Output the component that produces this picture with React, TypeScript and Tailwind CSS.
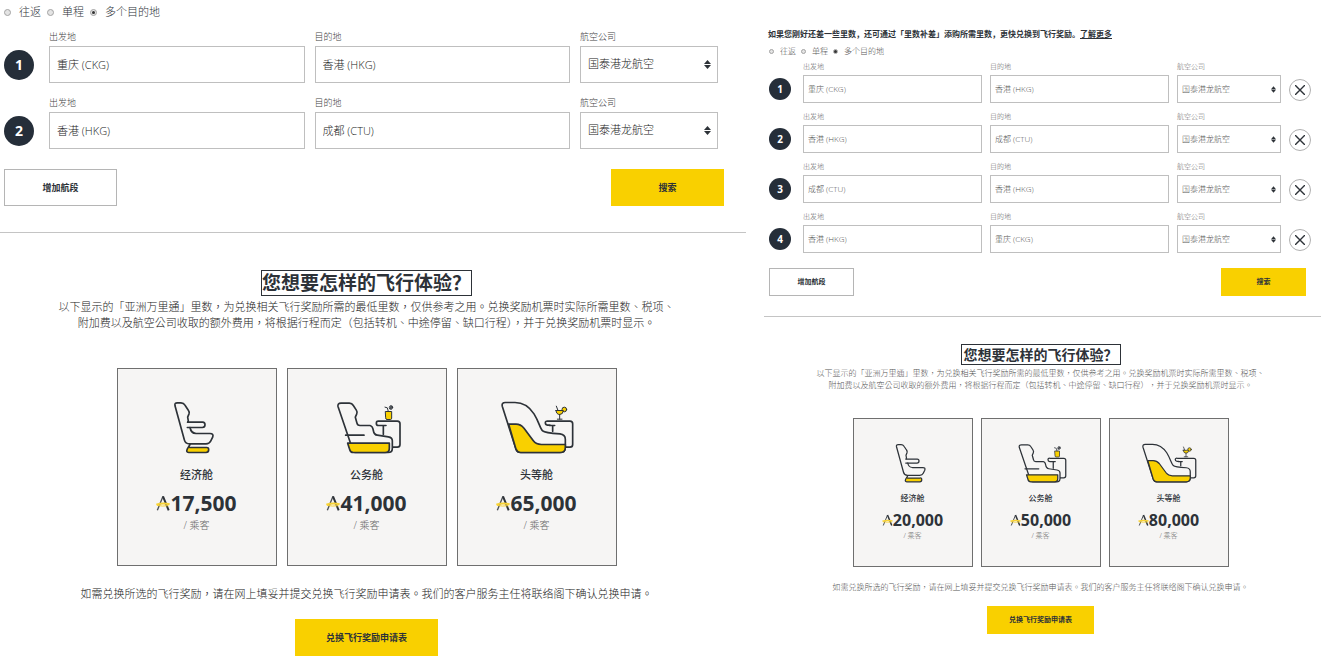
import clsx from 'clsx';
import { useId } from 'react';

type Size = 'lg' | 'sm';
type Cabin = 'economy' | 'business' | 'first';

type Segment = { from: string; to: string };
type Award = { cabin: Cabin; name: string; miles: string };

const styles = {
  lg: {
    radios: 'gap-[6px] pl-1 text-[11px] leading-4',
    radioLabel: 'gap-2',
    radio: 'size-[7px] after:size-[3px]',
    rows: 'gap-[15px] pl-1 pr-7 pt-3',
    row: 'grid-cols-[35px_1fr_1fr_138px] gap-[10px]',
    label: 'text-[9px] leading-[10px] pb-1 text-[#444]',
    control: 'h-[37px] px-[7px] text-[11px] text-[#222]',
    arrows: 'right-[7px] h-[9px] w-[7px]',
    number: 'size-[30px] text-sm mb-[3px]',
    actions: 'pl-1 pr-[22px] pt-5 pb-[26px]',
    button: 'h-[37px] w-[113px] text-[9px]',
    intro: 'pr-[13px] pt-[37px]',
    heading: 'h-[26px] text-[19px]',
    text: 'text-[11px] leading-4 text-[#222]',
    introText: 'pt-[3px]',
    cards: 'gap-[10px] pt-[37px]',
    card: 'w-40 pt-8 pb-8',
    seat: 'h-[53px] w-20',
    cabin: 'mt-[13px] text-[11px] leading-4',
    price: 'mt-2 text-[21px] leading-6',
    asia: 'h-4 w-[14px]',
    per: 'mt-[2px] text-[10px] leading-4',
    outro: 'pt-5 pb-[17px]',
    apply: 'h-[37px] w-[143px] text-[9px]',
  },
  sm: {
    radios: 'gap-[5px] pl-[5px] pt-1 text-[8px] leading-3 text-[#555]',
    radioLabel: 'gap-[6px]',
    radio: 'size-[5px] after:size-[3px]',
    rows: 'gap-2 pl-[5px] pr-[10px] pt-1',
    row: 'grid-cols-[26px_1fr_1fr_104px_22px] gap-2',
    label: 'text-[7px] leading-3 pb-[2px] text-[#666]',
    control: 'h-7 px-1 text-[8px] text-[#555]',
    arrows: 'right-[5px] h-[7px] w-[5px]',
    number: 'size-[22px] text-[10px] mb-[3px]',
    actions: 'pl-[5px] pr-[15px] pt-[15px] pb-5',
    button: 'h-7 w-[85px] text-[7px]',
    intro: 'pr-1 pt-[27px]',
    heading: 'h-[21px] px-[2px] text-sm',
    text: 'text-[8px] leading-3 text-[#555]',
    introText: 'pt-[2px]',
    cards: 'gap-2 pt-[27px]',
    card: 'w-[120px] pt-6 pb-6',
    seat: 'h-10 w-[60px]',
    cabin: 'mt-[9px] text-[8px] leading-3',
    price: 'mt-[7px] text-base leading-[18px]',
    asia: 'h-3 w-[11px]',
    per: 'mt-px text-[7px] leading-3',
    outro: 'pt-[14px] pb-[13px]',
    apply: 'h-7 w-[107px] text-[7px]',
  },
};

const Table = ({ d }: { d: string }) => <path d={d} fill="none" />;

const SeatIcon = ({ cabin, className }: { cabin: Cabin; className: string }) => {
  const common = {
    className,
    fill: '#f6f5f4',
    stroke: '#2d3238',
    strokeWidth: 5,
    strokeLinecap: 'round' as const,
    strokeLinejoin: 'round' as const,
    'aria-hidden': true,
  };

  if (cabin === 'economy') {
    return (
      <svg viewBox="141 124 240 158" {...common}>
        <path d="M240 254l-8 13q-5 11 4 11h52q8 0 8-8t-7-7h-50" fill="#f9d000" />
        <path
          d="M233 187l2-3-2-12 4-10q2-6-2-11l-10-15q-4-7-12-7h-11q-9 0-7 9l28 102q3 12 16 12h49q10 0 14-8l6-12q4-11-8-11h-42q-15-1-18-18"
          fill="none"
        />
        <path d="M233 187h45q7 0 7 8t-8 8h-45" fill="none" />
      </svg>
    );
  }

  if (cabin === 'business') {
    return (
      <svg viewBox="-99 124 240 158" {...common}>
        <Table d="M62 197h-6q-7 0-7-7t7-6h56q8 0 8 8v62q0 8-8 8H90M62 197h16M70 197v27" />
        <path d="M-66 140q-2-10 9-10h25q8 0 12 7l9 14q4 6 1 12l-4 9 5 18q1 7 9 7h30q8 2 10 15 2 13 12 14l33 5q12 2 12 12v22q0 13-13 13h-95q-9 0-11-9Z" />
        <path d="M-37 250H88v15q0 13-13 13h-95q-9 0-11-9Z" fill="#f9d000" />
        <path d="M-43 226h55" />
        <g strokeWidth="3">
          <path d="M77 155h18v20q0 4-4 4H81q-4 0-4-4Z" fill="#f9d000" />
          <path d="M85 155l-3-11-7-2" fill="none" />
          <circle cx="93" cy="143" r="5" />
          <path d="M89 146l8-6M93 138v10" />
        </g>
      </svg>
    );
  }

  return (
    <svg viewBox="411 124 240 158" {...common}>
      <Table d="M570 196h-8q-6-1-6-7t8-5h66q8 0 8 8v62q0 8-8 8h-12M568 197h16M578 197v17" />
      <path d="M427 140q-3-12 9-12h29c28 0 44 14 57 34 16 26 18 44 26 51q6 6 52 9 16 2 16 16v24q0 16-16 16H482q-10 0-14-10Z" />
      <path d="M446 193h22q14 0 24 12l28 38q8 11 24 11h72v8q0 16-16 16H482q-10 0-14-10Z" fill="#f9d000" />
      <g strokeWidth="3">
        <circle cx="613" cy="149" r="7" fill="#f9d000" />
        <path d="M588 152h22q-1 12-11 12t-11-12Z" fill="#f9d000" />
        <path d="M599 164v14M592 178h14M594 152l-5-13" fill="none" />
      </g>
    </svg>
  );
};

const AsiaMilesMark = ({ className }: { className: string }) => (
  <svg viewBox="0 0 42 48" className={className} fill="none" aria-hidden>
    <path d="M4 46 21 4" stroke="#4c5055" strokeWidth="4" />
    <path d="M21 4 38 46" stroke="#2d3238" strokeWidth="6" />
    <path d="M1 29q18-6 40-1" stroke="#f9d335" strokeWidth="6" />
    <path d="M3 31q16 4 34 1" stroke="#f9d335" strokeWidth="3" />
  </svg>
);

const TripType = ({ size }: { size: Size }) => {
  const s = styles[size];
  const name = useId();

  return (
    <div className={clsx('flex items-center font-light', s.radios)}>
      {['往返', '单程', '多个目的地'].map((type) => (
        <label key={type} className={clsx('flex items-center', s.radioLabel)}>
          <input
            type="radio"
            name={name}
            defaultChecked={type === '多个目的地'}
            className={clsx(
              'flex appearance-none items-center justify-center rounded-full border border-[#a3a3a3] bg-[#e4e4e4] after:rounded-full checked:after:bg-[#333]',
              s.radio,
            )}
          />
          {type}
        </label>
      ))}
    </div>
  );
};

const TextField = ({ size, label, value }: { size: Size; label: string; value: string }) => (
  <label className="flex min-w-0 flex-col font-light">
    <span className={styles[size].label}>{label}</span>
    <input
      type="text"
      defaultValue={value}
      className={clsx('w-full border border-[#bfbfbf] bg-white pb-[2px]', styles[size].control)}
    />
  </label>
);

const AirlineField = ({ size }: { size: Size }) => (
  <label className="flex min-w-0 flex-col font-light">
    <span className={styles[size].label}>航空公司</span>
    <span className="relative flex items-center">
      <select
        className={clsx('w-full appearance-none border border-[#bfbfbf] bg-white', styles[size].control)}
      >
        <option>国泰港龙航空</option>
      </select>
      <svg
        viewBox="0 0 7 9"
        className={clsx('pointer-events-none absolute', styles[size].arrows)}
        fill="#2d3238"
        aria-hidden
      >
        <path d="M0 4 3.5 0 7 4ZM0 5h7L3.5 9Z" />
      </svg>
    </span>
  </label>
);

const SearchForm = ({ size, segments }: { size: Size; segments: Segment[] }) => {
  const s = styles[size];

  return (
    <form className="border-b border-[#c4c4c4]">
      <TripType size={size} />
      <div className={clsx('flex flex-col', s.rows)}>
        {segments.map((segment, index) => (
          <div key={index} className={clsx('grid items-end', s.row)}>
            <span
              className={clsx(
                'flex items-center justify-center rounded-full bg-[#252e39] font-bold text-white',
                s.number,
              )}
            >
              {index + 1}
            </span>
            <TextField size={size} label="出发地" value={segment.from} />
            <TextField size={size} label="目的地" value={segment.to} />
            <AirlineField size={size} />
            {size === 'sm' && (
              <button
                type="button"
                aria-label="删除航段"
                className="mb-[2px] flex size-[22px] items-center justify-center rounded-full border border-[#b0b0b0]"
              >
                <svg viewBox="0 0 10 10" className="size-[10px]" stroke="#2d3238" aria-hidden>
                  <path d="M0 0 10 10M10 0 0 10" strokeWidth="1.4" />
                </svg>
              </button>
            )}
          </div>
        ))}
      </div>
      <div className={clsx('flex justify-between', s.actions)}>
        <button type="button" className={clsx('border border-[#b5b5b5] bg-white font-bold', s.button)}>
          增加航段
        </button>
        <button type="button" className={clsx('bg-[#f9d000] font-bold', s.button)}>
          搜索
        </button>
      </div>
    </form>
  );
};

const AwardCard = ({ size, award }: { size: Size; award: Award }) => {
  const s = styles[size];

  return (
    <article className={clsx('flex flex-col items-center border border-[#6f6f6f] bg-[#f6f5f4]', s.card)}>
      <SeatIcon cabin={award.cabin} className={s.seat} />
      <h3 className={clsx('font-medium', s.cabin)}>{award.name}</h3>
      <p className={clsx('flex items-center font-bold', s.price)}>
        <AsiaMilesMark className={s.asia} />
        {award.miles}
      </p>
      <p className={clsx('font-light text-[#666]', s.per)}>/ 乘客</p>
    </article>
  );
};

const Experience = ({ size, awards }: { size: Size; awards: Award[] }) => {
  const s = styles[size];
  const text = clsx("font-['Open_Sans','Noto_Sans_CJK_TC',sans-serif] font-light", s.text);

  return (
    <section className={clsx('flex flex-col items-center text-center', s.intro)}>
      <h2 className={clsx('flex items-center border border-[#2d3238] font-bold', s.heading)}>
        您想要怎样的飞行体验？
      </h2>
      <p lang="zh-Hant" className={clsx(text, s.introText)}>
        以下显示的「亚洲万里通」里数，为兑换相关飞行奖励所需的最低里数，仅供参考之用。兑换奖励机票时实际所需里数、税项、
        <br />
        附加费以及航空公司收取的额外费用，将根据行程而定（包括转机、中途停留、缺口行程），并于兑换奖励机票时显示。
      </p>
      <div className={clsx('flex', s.cards)}>
        {awards.map((award) => (
          <AwardCard key={award.cabin} size={size} award={award} />
        ))}
      </div>
      <p lang="zh-Hant" className={clsx(text, s.outro)}>
        如需兑换所选的飞行奖励，请在网上填妥并提交兑换飞行奖励申请表。我们的客户服务主任将联络阁下确认兑换申请。
      </p>
      <button type="button" className={clsx('bg-[#f9d000] font-bold', s.apply)}>
        兑换飞行奖励申请表
      </button>
    </section>
  );
};

const twoSegments: Segment[] = [
  { from: '重庆 (CKG)', to: '香港 (HKG)' },
  { from: '香港 (HKG)', to: '成都 (CTU)' },
];

const fourSegments: Segment[] = [
  { from: '重庆 (CKG)', to: '香港 (HKG)' },
  { from: '香港 (HKG)', to: '成都 (CTU)' },
  { from: '成都 (CTU)', to: '香港 (HKG)' },
  { from: '香港 (HKG)', to: '重庆 (CKG)' },
];

const twoSegmentAwards: Award[] = [
  { cabin: 'economy', name: '经济舱', miles: '17,500' },
  { cabin: 'business', name: '公务舱', miles: '41,000' },
  { cabin: 'first', name: '头等舱', miles: '65,000' },
];

const fourSegmentAwards: Award[] = [
  { cabin: 'economy', name: '经济舱', miles: '20,000' },
  { cabin: 'business', name: '公务舱', miles: '50,000' },
  { cabin: 'first', name: '头等舱', miles: '80,000' },
];

const App = () => (
  <main
    lang="zh-Hans"
    className="grid grid-cols-[746fr_557fr] gap-[18px] bg-white font-['Open_Sans','Noto_Sans_CJK_SC',sans-serif] text-[#2d3238]"
  >
    <div className="min-w-0 pt-1">
      <SearchForm size="lg" segments={twoSegments} />
      <Experience size="lg" awards={twoSegmentAwards} />
    </div>
    <div className="min-w-0 pt-7">
      <p className="pb-[1px] pl-1 text-[8px] leading-3 font-bold">
        如果您刚好还差一些里数，还可通过「里数补差」添购所需里数，更快兑换到飞行奖励。
        <a href="#top-up" className="underline">
          了解更多
        </a>
      </p>
      <SearchForm size="sm" segments={fourSegments} />
      <Experience size="sm" awards={fourSegmentAwards} />
    </div>
  </main>
);

export default App;
